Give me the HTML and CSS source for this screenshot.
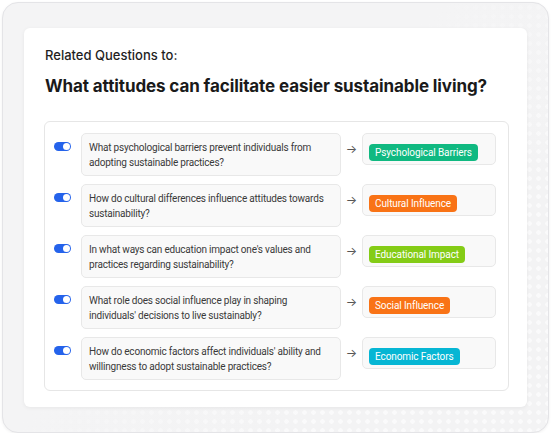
FILE: index.html
```html
<!DOCTYPE html>
<html>
<head>
<meta charset="utf-8">
<link rel="stylesheet" href="styles.css">
</head>
<body>
<div class="frame">
  <div class="card">
    <div class="eyebrow">Related Questions to:</div>
    <h1 class="title">What attitudes can facilitate easier sustainable living?</h1>
    <div class="list">
      <div class="row">
        <span class="toggle"></span>
        <div class="question">What psychological barriers prevent individuals from adopting sustainable practices?</div>
        <span class="arrow">→</span>
        <div class="tagbox"><span class="tag green">Psychological Barriers</span></div>
      </div>
      <div class="row">
        <span class="toggle"></span>
        <div class="question">How do cultural differences influence attitudes towards sustainability?</div>
        <span class="arrow">→</span>
        <div class="tagbox"><span class="tag orange">Cultural Influence</span></div>
      </div>
      <div class="row">
        <span class="toggle"></span>
        <div class="question">In what ways can education impact one's values and practices regarding sustainability?</div>
        <span class="arrow">→</span>
        <div class="tagbox"><span class="tag lime">Educational Impact</span></div>
      </div>
      <div class="row">
        <span class="toggle"></span>
        <div class="question">What role does social influence play in shaping individuals' decisions to live sustainably?</div>
        <span class="arrow">→</span>
        <div class="tagbox"><span class="tag orange">Social Influence</span></div>
      </div>
      <div class="row">
        <span class="toggle"></span>
        <div class="question">How do economic factors affect individuals' ability and willingness to adopt sustainable practices?</div>
        <span class="arrow">→</span>
        <div class="tagbox"><span class="tag cyan">Economic Factors</span></div>
      </div>
    </div>
  </div>
</div>
</body>
</html>
```

FILE: styles.css
```css
* { box-sizing: border-box; }
html, body {
  margin: 0;
  background: #ffffff;
  font-family: Inter, "Noto Sans", sans-serif;
}
.frame {
  margin: 2px 0 0 2px;
  width: 547px;
  height: 431px;
  border: 1px solid #e4e4e7;
  border-radius: 16px;
  background-color: #f3f3f4;
  background-image:
    linear-gradient(135deg, #f4f4f5 45%, rgba(244,244,245,0) 75%),
    radial-gradient(circle, rgba(255,255,255,0.6) 2px, transparent 2.5px);
  background-size: 100% 100%, 9px 9px;
  padding: 25px 0 0 21px;
  box-shadow: 0 1px 3px rgba(0,0,0,0.06);
}
.card {
  width: 503px;
  height: 379px;
  background: #ffffff;
  border-radius: 6px;
  box-shadow: 0 1px 4px rgba(0,0,0,0.06);
  padding: 19px 18px 0 20px;
}
.eyebrow {
  font-size: 13px;
  font-weight: 500;
  line-height: 16px;
  color: #1f1f1f;
  padding-left: 1px;
}
.title {
  margin: 12px 0 0 0;
  font-size: 17px;
  font-weight: 700;
  line-height: 22px;
  letter-spacing: -0.1px;
  color: #1a1a1a;
  padding-left: 1px;
}
.list {
  margin-top: 24px;
  width: 465px;
  height: 270px;
  border: 1px solid #e6e6e6;
  border-radius: 6px;
  padding: 11px 0 0 9px;
  display: flex;
  flex-direction: column;
  gap: 8px;
}
.row {
  display: flex;
  align-items: flex-start;
}
.toggle {
  position: relative;
  flex: none;
  width: 17px;
  height: 9px;
  margin-top: 9px;
  border-radius: 5px;
  background: #2563eb;
}
.toggle::after {
  content: "";
  position: absolute;
  right: 1px;
  top: 1px;
  width: 7px;
  height: 7px;
  border-radius: 50%;
  background: #ffffff;
}
.question {
  margin-left: 10px;
  width: 260px;
  height: 43px;
  background: #f9f9f9;
  border: 1px solid #e8e8e8;
  border-radius: 5px;
  padding: 6px 8px 0 7px;
  font-family: Roboto, "Noto Sans", sans-serif;
  font-size: 10px;
  letter-spacing: -0.2px;
  line-height: 15px;
  color: #3a3a3a;
}
.arrow {
  flex: none;
  width: 21px;
  text-align: center;
  font-size: 12px;
  line-height: 32px;
  color: #555;
}
.tagbox {
  width: 134px;
  height: 32px;
  background: #f9f9f9;
  border: 1px solid #e8e8e8;
  border-radius: 5px;
  padding: 6px 0 0 6px;
}
.tag {
  display: inline-block;
  height: 17px;
  line-height: 17px;
  padding: 0 6px;
  border-radius: 4px;
  font-family: Roboto, "Noto Sans", sans-serif;
  font-size: 10px;
  letter-spacing: -0.1px;
  color: #ffffff;
}
.green { background: #10b981; }
.orange { background: #f97316; }
.lime { background: #84cc16; }
.cyan { background: #06b6d4; }
```
